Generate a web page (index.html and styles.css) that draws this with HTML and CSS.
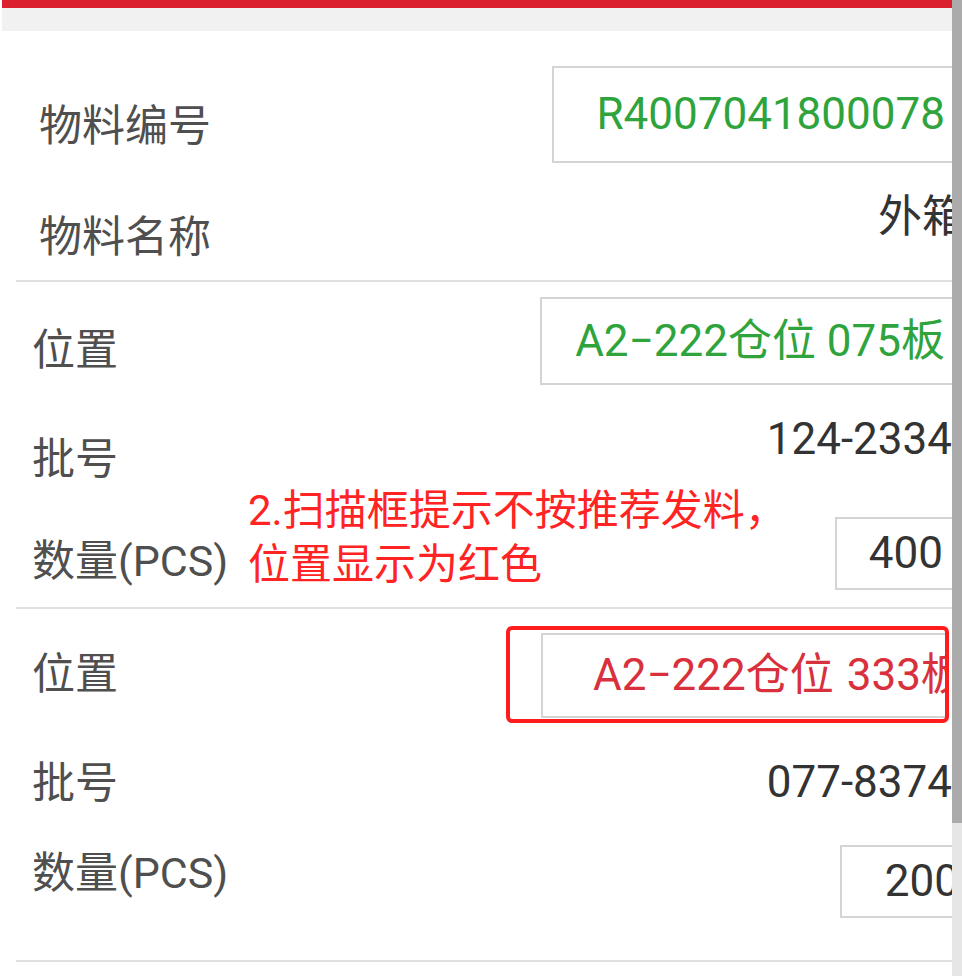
FILE: index.html
```html
<!DOCTYPE html>
<html lang="zh-CN">
<head>
    <meta charset="UTF-8">
    <meta name="viewport" content="width=device-width, initial-scale=1.0">
    <title>发料扫描</title>
    <link rel="stylesheet" href="styles.css">
</head>
<body>
    <div class="screen">
        <div class="page">
            <div class="topbar"></div>
            <div class="subbar"></div>

            <div class="form">
                <!-- 物料 -->
                <div class="group group-material">
                    <div class="row row-code">
                        <span class="label">物料编号</span>
                        <div class="box box-code ok">R4007041800078</div>
                    </div>
                    <div class="row row-name">
                        <span class="label">物料名称</span>
                        <span class="value value-name">外箱</span>
                    </div>
                </div>

                <!-- 推荐位置 -->
                <div class="group">
                    <div class="row row-loc">
                        <span class="label">位置</span>
                        <div class="box box-loc ok">A2−222仓位 075板</div>
                    </div>
                    <div class="row row-lot">
                        <span class="label">批号</span>
                        <span class="value">124-2334</span>
                    </div>
                    <div class="row row-qty">
                        <span class="label">数量(PCS)</span>
                        <div class="box box-qty">400</div>
                    </div>
                </div>

                <!-- 实际扫描位置 -->
                <div class="group group-last">
                    <div class="row row-loc2">
                        <span class="label">位置</span>
                        <div class="box box-loc2 wrong">A2−222仓位 333板</div>
                    </div>
                    <div class="row row-lot2">
                        <span class="label">批号</span>
                        <span class="value">077-8374</span>
                    </div>
                    <div class="row row-qty2">
                        <span class="label">数量(PCS)</span>
                        <div class="box box-qty2">200</div>
                    </div>
                </div>
            </div>

            <!-- annotations -->
            <div class="note">2.扫描框提示不按推荐发料，<br>位置显示为红色</div>
            <div class="mark"></div>
        </div>

        <div class="scrollbar">
            <div class="thumb"></div>
        </div>
    </div>
</body>
</html>
```

FILE: styles.css
```css
:root {
    --red: #dc1f2e;
    --green: #2fa43d;
    --wrong: #d8303c;
    --note: #ff2323;
    --label: #4f4f4f;
    --text: #333333;
    --line: #e0e0e0;
    --border: #d4d4d4;
}

* {
    margin: 0;
    padding: 0;
    box-sizing: border-box;
}

body {
    background: #ffffff;
    font-family: Roboto, "Noto Sans CJK SC", sans-serif;
    overflow: hidden;
}

/* Layout */
.screen {
    display: flex;
    height: 976px;
    overflow: hidden;
}

.page {
    flex: 1;
    min-width: 0;
    overflow: hidden;
    position: relative;
}

.topbar {
    height: 8px;
    background: var(--red);
    margin-left: 2px;
}

.subbar {
    height: 23px;
    background: #f1f1f1;
    margin-left: 2px;
}

.form {
    width: 980px;
    padding-left: 16px;
}

.group {
    border-bottom: 2px solid var(--line);
}

.group-material {
    padding-top: 18px;
}

.group-last {
    padding-bottom: 21px;
}

.row {
    display: flex;
    justify-content: space-between;
    align-items: center;
}

.label {
    font-size: 43px;
    line-height: 1.2;
    color: var(--label);
    padding-left: 16px;
    white-space: nowrap;
}

.group-material .label {
    padding-left: 23px;
}

.value {
    font-size: 44px;
    line-height: 1.2;
    color: var(--text);
    margin-right: 28px;
    white-space: nowrap;
}

.value-name {
    margin-right: 14px;
}

/* Input boxes */
.box {
    display: flex;
    align-items: center;
    justify-content: flex-end;
    border: 2px solid var(--border);
    border-right: none;
    font-size: 44px;
    line-height: 1.2;
    color: var(--text);
    padding-right: 35px;
    white-space: nowrap;
    overflow: hidden;
}

.ok {
    color: var(--green);
}

.wrong {
    color: var(--wrong);
}

.box-code {
    width: 428px;
    height: 97px;
}

.box-loc {
    width: 440px;
    height: 88px;
}

.box-loc2 {
    width: 407px;
    height: 85px;
    margin-right: 32px;
    justify-content: flex-start;
    padding-right: 0;
    padding-left: 50px;
    border-right: 2px solid var(--border);
    word-spacing: 2px;
}

.box-qty {
    width: 145px;
    height: 73px;
    padding-right: 37px;
}

.box-qty2 {
    width: 140px;
    height: 73px;
    padding-right: 21px;
}

/* Row heights */
.row-code { height: 131px; }
.row-code .label { padding-top: 24px; }

.row-name { height: 100px; }
.row-name .label { padding-top: 15px; }
.row-name .value { padding-bottom: 26px; }

.row-loc { height: 118px; }
.row-loc .label { padding-top: 19px; }

.row-lot { height: 100px; }
.row-lot .label { padding-top: 19px; }
.row-lot .value { padding-bottom: 22px; }

.row-qty { height: 107px; }
.row-qty .label { padding-top: 16px; }

.row-loc2 { height: 132px; }
.row-loc2 .label { padding-top: 0; }

.row-lot2 { height: 83px; }
.row-lot2 .label { padding-top: 3px; }

.row-qty2 { height: 115px; }
.row-qty2 .label { padding-bottom: 16px; }

/* Annotations */
.note {
    position: absolute;
    left: 248px;
    top: 484px;
    font-size: 42px;
    line-height: 54px;
    color: var(--note);
    white-space: nowrap;
}

.mark {
    position: absolute;
    left: 506px;
    top: 626px;
    width: 443px;
    height: 97px;
    border: 4px solid #ff1c1c;
    border-radius: 6px;
}

/* Scrollbar */
.scrollbar {
    width: 10px;
    background: #e6e6e6;
}

.thumb {
    height: 823px;
    background: #ababab;
}
```
